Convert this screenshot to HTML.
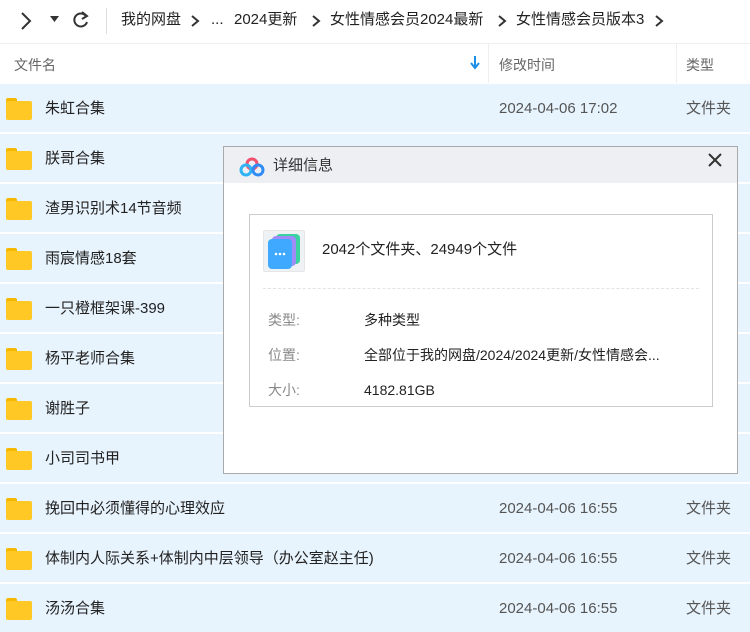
<!DOCTYPE html>
<html><head><meta charset="utf-8"><style>
*{margin:0;padding:0;box-sizing:border-box}
body{width:750px;height:630px;overflow:hidden;background:#fff;font-family:"Liberation Sans","Noto Sans CJK SC",sans-serif;position:relative;color:#333}
span,div{line-height:20px}
.top{position:absolute;left:0;top:0;width:750px;height:44px;border-bottom:1px solid #eee}
.bc{position:absolute;top:10px;font-size:15px;color:#222;white-space:nowrap}
.ch{position:absolute;top:14px}
.hdr{position:absolute;top:44px;left:0;width:750px;height:39px;font-size:14px;color:#666}
.hdr span{position:absolute;top:11px}
.vl{position:absolute;top:44px;width:1px;height:39px;background:#eee}
.row{position:absolute;left:0;width:750px;height:48px;background:#e8f4fd;font-size:15px;color:#222}
.row span{position:absolute;top:15px;white-space:nowrap}
.row .n{left:45px}
.row .d{left:499px;color:#555}
.row .t{left:686px;color:#555}
.fo{position:absolute;left:6px;top:13px;width:26px;height:23px}
.dlg{position:absolute;left:223px;top:146px;width:515px;height:328px;background:#fff;border:1px solid #aaa}
.tb{height:36px;background:#eeeff3;position:relative}
.box{position:absolute;left:25px;top:67px;width:464px;height:193px;border:1px solid #ccc;background:#fff}
.lb{position:absolute;left:18px;font-size:14px;color:#888}
.vv{position:absolute;left:114px;font-size:14px;color:#222;white-space:nowrap}
</style></head><body>
<div class="top">
<svg style="position:absolute;left:19px;top:11px" width="14" height="20"><path d="M3 2 L11 10 L3 18" stroke="#333" stroke-width="2" fill="none"/></svg>
<svg style="position:absolute;left:50px;top:16px" width="9" height="7"><path d="M0 0 H9 L4.5 6 Z" fill="#333"/></svg>
<svg style="position:absolute;left:72px;top:10px" width="18" height="20"><path d="M14 6 A6.5 6.5 0 1 0 15 12" stroke="#333" stroke-width="2" fill="none"/><path d="M10 2 L15 6 L10 9" stroke="#333" stroke-width="2" fill="none"/></svg>
<div style="position:absolute;left:106px;top:8px;width:1px;height:26px;background:#ddd"></div>
<div class="bc" style="left:121px">我的网盘</div>
<svg class="ch" style="left:190px" width="10" height="14"><path d="M2 2 L8 7 L2 12" stroke="#333" stroke-width="2" fill="none"/></svg>
<div class="bc" style="left:211px">...</div>
<div class="bc" style="left:234px">2024更新</div>
<svg class="ch" style="left:311px" width="10" height="14"><path d="M2 2 L8 7 L2 12" stroke="#333" stroke-width="2" fill="none"/></svg>
<div class="bc" style="left:330px">女性情感会员2024最新</div>
<svg class="ch" style="left:497px" width="10" height="14"><path d="M2 2 L8 7 L2 12" stroke="#333" stroke-width="2" fill="none"/></svg>
<div class="bc" style="left:516px">女性情感会员版本3</div>
<svg class="ch" style="left:654px" width="10" height="14"><path d="M2 2 L8 7 L2 12" stroke="#333" stroke-width="2" fill="none"/></svg>
</div>
<div class="hdr"><span style="left:14px">文件名</span><span style="left:499px">修改时间</span><span style="left:686px">类型</span>
<svg style="position:absolute;left:470px;top:11px" width="10" height="15"><path d="M5 1 V12 M1 8 L5 13 L9 8" stroke="#1a8fe8" stroke-width="2" fill="none"/></svg></div>
<div class="vl" style="left:488px"></div><div class="vl" style="left:676px"></div>

<div class="row" style="top:84px"><svg class="fo"><rect x="0" y="1" width="11" height="6" rx="2" fill="#f5b800"/><rect x="0" y="4" width="26" height="19" rx="2" fill="#ffc824"/></svg><span class="n">朱虹合集</span><span class="d">2024-04-06 17:02</span><span class="t">文件夹</span></div>
<div class="row" style="top:134px"><svg class="fo"><rect x="0" y="1" width="11" height="6" rx="2" fill="#f5b800"/><rect x="0" y="4" width="26" height="19" rx="2" fill="#ffc824"/></svg><span class="n">朕哥合集</span></div>
<div class="row" style="top:184px"><svg class="fo"><rect x="0" y="1" width="11" height="6" rx="2" fill="#f5b800"/><rect x="0" y="4" width="26" height="19" rx="2" fill="#ffc824"/></svg><span class="n">渣男识别术14节音频</span></div>
<div class="row" style="top:234px"><svg class="fo"><rect x="0" y="1" width="11" height="6" rx="2" fill="#f5b800"/><rect x="0" y="4" width="26" height="19" rx="2" fill="#ffc824"/></svg><span class="n">雨宸情感18套</span></div>
<div class="row" style="top:284px"><svg class="fo"><rect x="0" y="1" width="11" height="6" rx="2" fill="#f5b800"/><rect x="0" y="4" width="26" height="19" rx="2" fill="#ffc824"/></svg><span class="n">一只橙框架课-399</span></div>
<div class="row" style="top:334px"><svg class="fo"><rect x="0" y="1" width="11" height="6" rx="2" fill="#f5b800"/><rect x="0" y="4" width="26" height="19" rx="2" fill="#ffc824"/></svg><span class="n">杨平老师合集</span></div>
<div class="row" style="top:384px"><svg class="fo"><rect x="0" y="1" width="11" height="6" rx="2" fill="#f5b800"/><rect x="0" y="4" width="26" height="19" rx="2" fill="#ffc824"/></svg><span class="n">谢胜子</span></div>
<div class="row" style="top:434px"><svg class="fo"><rect x="0" y="1" width="11" height="6" rx="2" fill="#f5b800"/><rect x="0" y="4" width="26" height="19" rx="2" fill="#ffc824"/></svg><span class="n">小司司书甲</span></div>
<div class="row" style="top:484px"><svg class="fo"><rect x="0" y="1" width="11" height="6" rx="2" fill="#f5b800"/><rect x="0" y="4" width="26" height="19" rx="2" fill="#ffc824"/></svg><span class="n">挽回中必须懂得的心理效应</span><span class="d">2024-04-06 16:55</span><span class="t">文件夹</span></div>
<div class="row" style="top:534px"><svg class="fo"><rect x="0" y="1" width="11" height="6" rx="2" fill="#f5b800"/><rect x="0" y="4" width="26" height="19" rx="2" fill="#ffc824"/></svg><span class="n">体制内人际关系+体制内中层领导（办公室赵主任)</span><span class="d">2024-04-06 16:55</span><span class="t">文件夹</span></div>
<div class="row" style="top:584px"><svg class="fo"><rect x="0" y="1" width="11" height="6" rx="2" fill="#f5b800"/><rect x="0" y="4" width="26" height="19" rx="2" fill="#ffc824"/></svg><span class="n">汤汤合集</span><span class="d">2024-04-06 16:55</span><span class="t">文件夹</span></div>

<div class="dlg">
<div class="tb">
<svg style="position:absolute;left:15px;top:10px" width="26" height="20"><circle cx="13" cy="7" r="5" stroke="#f0506e" stroke-width="3" fill="none"/><circle cx="7" cy="13" r="5" stroke="#2fb3f5" stroke-width="3" fill="none"/><circle cx="19" cy="13" r="5" stroke="#2f8cf5" stroke-width="3" fill="none"/></svg>
<span style="position:absolute;left:49px;top:9px;font-size:15px;color:#333">详细信息</span>
<svg style="position:absolute;left:484px;top:6px" width="14" height="14"><path d="M1 1 L13 13 M13 1 L1 13" stroke="#333" stroke-width="2"/></svg>
</div>
<div class="box">
<div style="position:absolute;left:13px;top:15px;width:42px;height:42px;border:1px solid #e6e6e6;background:#eef2f5;border-radius:2px">
<svg width="40" height="40"><rect x="12" y="3" width="24" height="30" rx="4" fill="#3ad29f"/><rect x="8" y="5" width="24" height="30" rx="4" fill="#9f8cf7"/><rect x="4" y="8" width="24" height="30" rx="4" fill="#3fa9ff"/><circle cx="12" cy="23" r="1.3" fill="#fff"/><circle cx="16" cy="23" r="1.3" fill="#fff"/><circle cx="20" cy="23" r="1.3" fill="#fff"/></svg></div>
<span style="position:absolute;left:72px;top:25px;font-size:15px;color:#222;white-space:nowrap">2042个文件夹、24949个文件</span>
<div style="position:absolute;left:13px;right:13px;top:73px;border-top:1px dashed #e3e3e3"></div>
<span class="lb" style="top:95px">类型:</span><span class="vv" style="top:95px">多种类型</span>
<span class="lb" style="top:130px">位置:</span><span class="vv" style="top:130px">全部位于我的网盘/2024/2024更新/女性情感会...</span>
<span class="lb" style="top:165px">大小:</span><span class="vv" style="top:165px">4182.81GB</span>
</div>
</div>
</body></html>
